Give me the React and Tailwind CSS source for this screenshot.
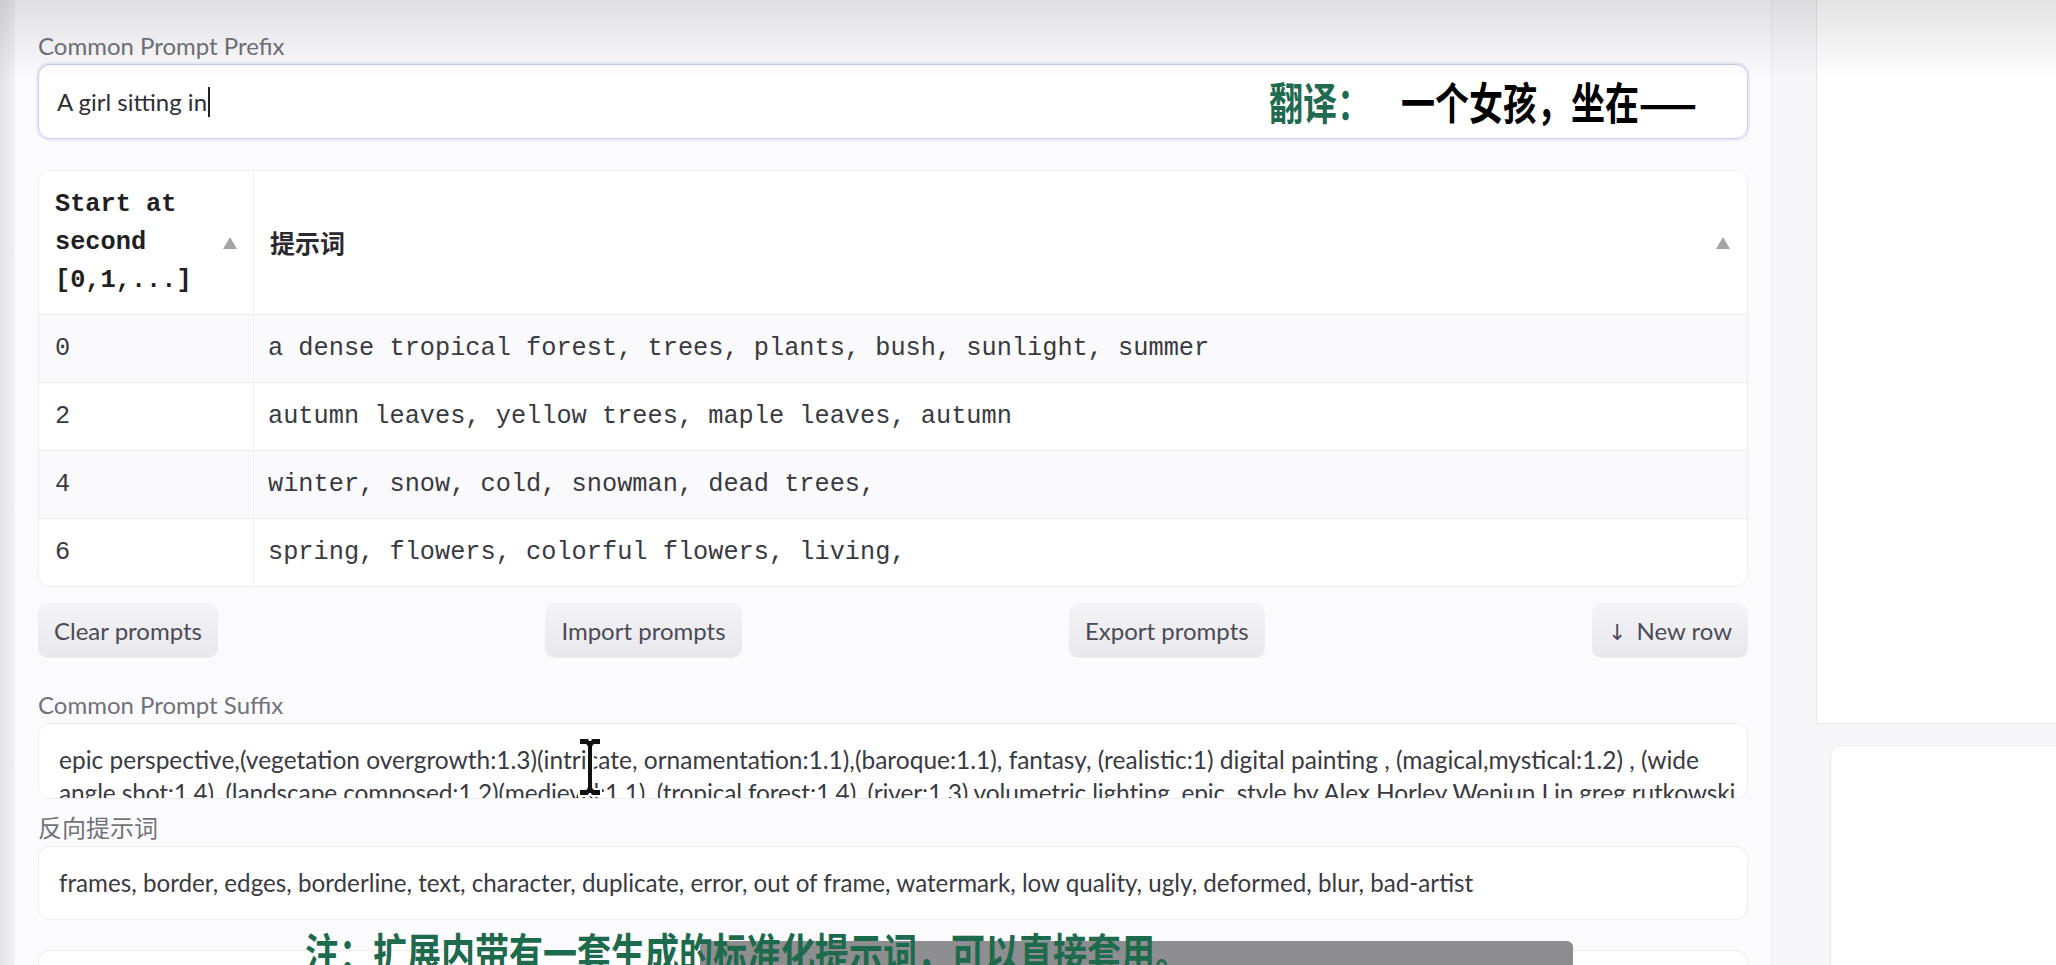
import React from 'react';

const sans = "font-['Lato','Noto_Sans_CJK_SC',sans-serif]";
const mono = "font-['Liberation_Mono','Noto_Sans_CJK_SC',monospace]";

const rows = [
  { t: '0', p: 'a dense tropical forest, trees, plants, bush, sunlight, summer', alt: true },
  { t: '2', p: 'autumn leaves, yellow trees, maple leaves, autumn', alt: false },
  { t: '4', p: 'winter, snow, cold, snowman, dead trees,', alt: true },
  { t: '6', p: 'spring, flowers, colorful flowers, living,', alt: false },
];

function SortArrow() {
  return (
    <svg width="14" height="12" viewBox="0 0 14 12" className="flex-shrink-0">
      <path d="M7 0 L14 12 L0 12 Z" fill="#a3a3a8" />
    </svg>
  );
}

function Label({ children, className = '' }) {
  return (
    <div className={`shrink-0 h-[36px] flex items-center text-[24px] text-[#72727a] ${sans} ${className}`}>{children}</div>
  );
}

function Btn({ children }) {
  return (
    <button className={`h-[55px] px-4 rounded-[10px] bg-gradient-to-b from-[#f4f4f7] to-[#e8e8ed] text-[24px] text-[#4b4b55] ${sans}`}>
      {children}
    </button>
  );
}

export default function App() {
  return (
    <div className="relative w-[2056px] h-[965px] overflow-hidden bg-[#f7f7f9] flex">
      <div className="w-[15px] bg-gradient-to-r from-[#e4e4e8] to-[#f1f1f4]" />

      <div className="w-[1757px] bg-[#fbfbfd] border-r border-[#e9e9ee] px-[23px] pt-[28px] flex flex-col">
        <Label>Common Prompt Prefix</Label>
        <div className="shrink-0 relative h-[75px] bg-white rounded-[12px] border border-[#c9cdec] shadow-[0_0_0_2px_rgba(200,205,240,0.35)] flex items-center pl-[18px]">
          <span className={`text-[24px] text-[#2f2f36] ${sans}`}>A girl sitting in</span>
          <span className="w-[2px] h-[30px] bg-[#222] ml-[1px]" />
          <div className="absolute left-[1230px] top-[15px] flex items-center font-['Noto_Sans_CJK_SC',sans-serif] font-bold text-[34px] leading-[44px] scale-y-[1.3]">
            <span className="text-[#1f6a50]">翻译：</span>
            <span className="ml-[30px] text-black">一个女孩，坐在——</span>
          </div>
        </div>

        <div className="shrink-0 mt-[31px] bg-white rounded-[12px] border border-[#ececf1] overflow-hidden">
          <div className="h-[143px] flex bg-white">
            <div className="w-[215px] border-r border-[#efeff3] flex items-center pl-[16px] pr-[16px] justify-between">
              <div className={`${mono} font-bold text-[25.3px] leading-[38px] text-[#1f1f24]`}>
                Start at<br />second<br />[0,1,...]
              </div>
              <SortArrow />
            </div>
            <div className="flex-1 flex items-center justify-between pl-[16px] pr-[17px]">
              <span className="font-['Noto_Sans_CJK_SC',sans-serif] font-semibold text-[25px] text-[#2a2a30]">提示词</span>
              <SortArrow />
            </div>
          </div>
          {rows.map((r) => (
            <div key={r.t} className={`h-[68px] flex border-t border-[#ececf1] ${r.alt ? 'bg-[#fafafc]' : 'bg-white'}`}>
              <div className={`w-[215px] border-r border-[#efeff3] flex items-center pl-[16px] ${mono} text-[25.3px] text-[#3a3a42]`}>{r.t}</div>
              <div className={`flex-1 flex items-center pl-[14px] ${mono} text-[25.3px] text-[#3a3a42] whitespace-nowrap`}>{r.p}</div>
            </div>
          ))}
        </div>

        <div className="shrink-0 mt-[16px] flex justify-between">
          <Btn>Clear prompts</Btn>
          <Btn>Import prompts</Btn>
          <Btn>Export prompts</Btn>
          <Btn>
            <span className="font-['DejaVu_Sans',sans-serif] text-[22px] mr-[10px]">↓</span>New row
          </Btn>
        </div>

        <Label className="mt-[29px]">Common Prompt Suffix</Label>
        <div className={`shrink-0 relative h-[76px] bg-white rounded-[12px] border border-[#ececf1] overflow-hidden pl-[20px] pt-[19px] text-[24.5px] leading-[33px] text-[#3a3a42] ${sans}`}>
          <div className="whitespace-nowrap">epic perspective,(vegetation overgrowth:1.3)(intricate, ornamentation:1.1),(baroque:1.1), fantasy, (realistic:1) digital painting , (magical,mystical:1.2) , (wide</div>
          <div className="whitespace-nowrap tracking-[-0.15px]">angle shot:1.4), (landscape composed:1.2)(medieval:1.1), (tropical forest:1.4), (river:1.3) volumetric lighting, epic, style by Alex Horley Wenjun Lin greg rutkowski</div>
        </div>

        <Label className="mt-[11px]">反向提示词</Label>
        <div className={`shrink-0 h-[74px] bg-white rounded-[12px] border border-[#ececf1] flex items-center pl-[20px] text-[24.2px] text-[#3a3a42] ${sans} whitespace-nowrap`}>
          frames, border, edges, borderline, text, character, duplicate, error, out of frame, watermark, low quality, ugly, deformed, blur, bad-artist
        </div>

        <div className="shrink-0 mt-[30px] h-[80px] bg-white rounded-t-[12px] border border-[#ececf1]" />
      </div>

      <div className="flex-1 flex flex-col pl-[44px]">
        <div className="shrink-0 h-[724px] bg-white border-l border-b border-[#e6e6eb]" />
        <div className="mt-[21px] ml-[14px] flex-1 bg-white rounded-tl-[12px] border-l border-t border-[#ececf1]" />
      </div>

      {/* top shading from the video frame */}
      <div className="absolute left-0 top-0 w-full h-[80px] bg-gradient-to-b from-[rgba(0,0,0,0.11)] to-transparent pointer-events-none" />

      {/* mouse I-beam cursor */}
      <svg className="absolute left-[577px] top-[736px]" width="26" height="62" viewBox="0 0 26 62">
        <path d="M2 2 H10 Q13 2 13 5 Q13 2 16 2 H24 V9 H18 Q16 9 16 12 V50 Q16 53 18 53 H24 V60 H16 Q13 60 13 57 Q13 60 10 60 H2 V53 H8 Q10 53 10 50 V12 Q10 9 8 9 H2 Z" fill="#111" stroke="#fff" strokeWidth="2" />
      </svg>

      {/* gray bar at the bottom of the frame */}
      <div className="absolute left-[700px] top-[941px] w-[873px] h-[30px] rounded-t-[6px] bg-[#8e8e90]" />

      {/* subtitle */}
      <div className="absolute left-[305px] top-[924px] font-['Noto_Sans_CJK_SC',sans-serif] font-bold text-[34px] leading-[44px] text-[#1d6a4d] whitespace-nowrap scale-y-[1.25] origin-top">
        注：扩展内带有一套生成的标准化提示词，可以直接套用。
      </div>
    </div>
  );
}
